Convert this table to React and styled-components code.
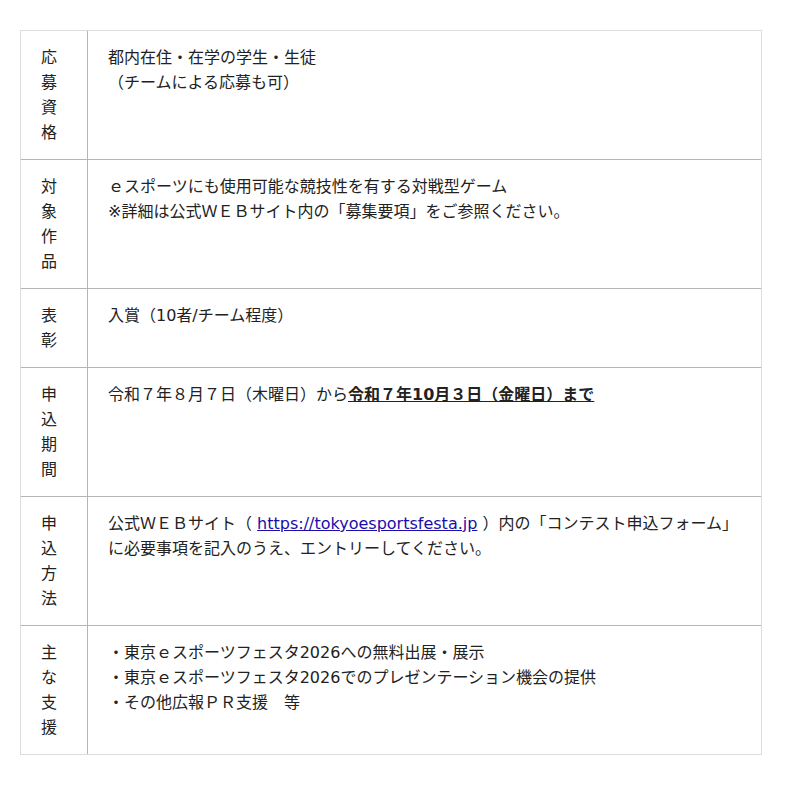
import styled, { createGlobalStyle } from "styled-components";

const Global = createGlobalStyle`
  body {
    margin: 0;
    background: #fff;
    font-family: "DejaVu Sans", "Noto Sans CJK JP", sans-serif;
    color: #222;
  }
`;

const Page = styled.div`
  padding: 30px 38px 30px 20px;
`;

const Table = styled.table`
  width: 742px;
  border-collapse: separate;
  border-spacing: 0;
  border: 1px solid #dcdcdc;
  font-size: 16px;
  line-height: 25px;
`;

const Row = styled.tr`
  &:not(:last-child) > td {
    border-bottom: 1px solid #b5b5b5;
  }
`;

const Head = styled.td`
  width: 26px;
  padding: 14px 20px;
  vertical-align: top;
  border-right: 1px solid #b5b5b5;
  word-break: break-all;
`;

const Body = styled.td`
  padding: 14px 20px;
  vertical-align: top;
`;

const Strong = styled.strong`
  font-weight: bold;
  text-decoration: underline;
`;

const Link = styled.a`
  color: #1a0dab;
  text-decoration: underline;
`;

const rows = [
  {
    head: "応募資格",
    body: (
      <>
        都内在住・在学の学生・生徒
        <br />
        （チームによる応募も可）
      </>
    ),
  },
  {
    head: "対象作品",
    body: (
      <>
        ｅスポーツにも使用可能な競技性を有する対戦型ゲーム
        <br />
        ※詳細は公式ＷＥＢサイト内の「募集要項」をご参照ください。
      </>
    ),
  },
  { head: "表彰", body: <>入賞（10者/チーム程度）</> },
  {
    head: "申込期間",
    body: (
      <>
        令和７年８月７日（木曜日）から
        <Strong>令和７年10月３日（金曜日）まで</Strong>
      </>
    ),
  },
  {
    head: "申込方法",
    body: (
      <>
        公式ＷＥＢサイト（{" "}
        <Link href="#">https://tokyoesportsfesta.jp</Link>{" "}
        ）内の「コンテスト申込フォーム」に必要事項を記入のうえ、エントリーしてください。
      </>
    ),
  },
  {
    head: "主な支援",
    body: (
      <>
        ・東京ｅスポーツフェスタ2026への無料出展・展示
        <br />
        ・東京ｅスポーツフェスタ2026でのプレゼンテーション機会の提供
        <br />
        ・その他広報ＰＲ支援　等
      </>
    ),
  },
];

export default function App() {
  return (
    <Page>
      <Global />
      <Table>
        <tbody>
          {rows.map((r) => (
            <Row key={r.head}>
              <Head>{r.head}</Head>
              <Body>{r.body}</Body>
            </Row>
          ))}
        </tbody>
      </Table>
    </Page>
  );
}
